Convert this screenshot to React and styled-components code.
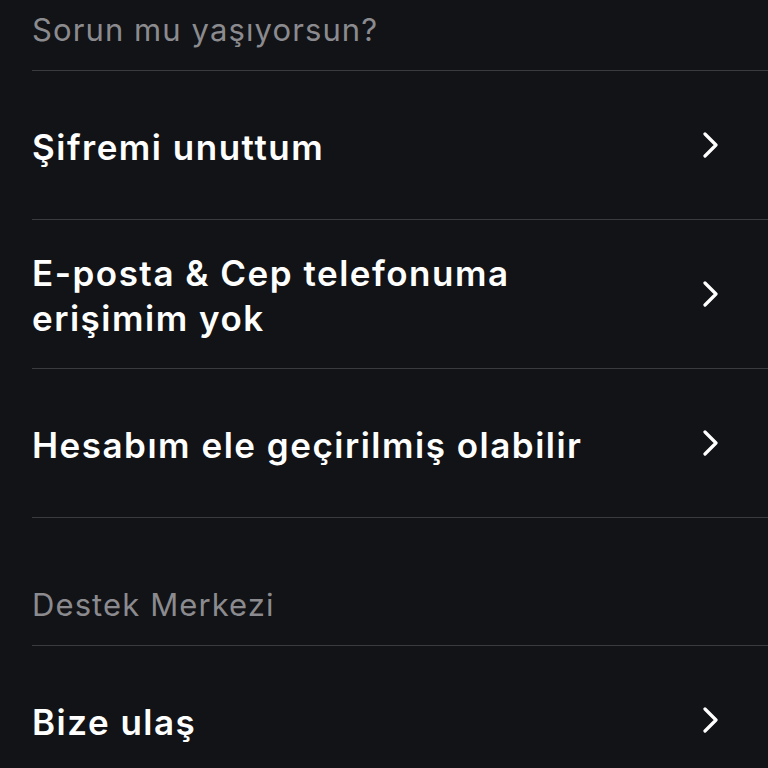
import React from 'react';
import styled, { createGlobalStyle } from 'styled-components';

const GlobalStyle = createGlobalStyle`
    html, body {
        margin: 0;
        padding: 0;
        background: #121316;
    }
    body {
        font-family: Inter, "Noto Sans", sans-serif;
        -webkit-font-smoothing: antialiased;
    }
`;

const sections = [
    {
        title: 'Sorun mu yaşıyorsun?',
        items: [
            'Şifremi unuttum',
            'E-posta & Cep telefonuma erişimim yok',
            'Hesabım ele geçirilmiş olabilir',
        ],
    },
    {
        title: 'Destek Merkezi',
        items: ['Bize ulaş'],
    },
];

const Chevron = () => (
    <svg width="18" height="26" viewBox="0 0 18 26" fill="none">
        <path d="M3 2 L14 13 L3 24" stroke="#fff" strokeWidth="3.2" strokeLinecap="round" strokeLinejoin="round"/>
    </svg>
);

export default function App() {
    return (
        <Page>
            <GlobalStyle/>
            {sections.map((section, i) => (
                <Section key={section.title}>
                    <SectionTitle first={i === 0}>{section.title}</SectionTitle>
                    {section.items.map(item => (
                        <Row key={item}>
                            <RowLabel>{item}</RowLabel>
                            <ChevronBox><Chevron/></ChevronBox>
                        </Row>
                    ))}
                </Section>
            ))}
        </Page>
    );
}

const Page = styled.div`
    min-height: 768px;
    background: #121316;
    padding-left: 32px;
    overflow: hidden;
`;

const Section = styled.section`
    display: flex;
    flex-direction: column;
`;

const SectionTitle = styled.div`
    height: ${p => (p.first ? '71px' : '128px')};
    box-sizing: border-box;
    display: flex;
    align-items: flex-end;
    padding-bottom: 22px;
    font-size: 31px;
    font-weight: 400;
    color: #8b8b8f;
    letter-spacing: 1.1px;
    border-bottom: 1.5px solid #3a3b3f;
`;

const Row = styled.div`
    height: 149px;
    box-sizing: border-box;
    display: flex;
    align-items: center;
    justify-content: space-between;
    padding-top: 4px;
    padding-right: 48px;
    border-bottom: 1.5px solid #3a3b3f;
`;

const RowLabel = styled.div`
    max-width: 560px;
    font-size: 35px;
    font-weight: 600;
    line-height: 45px;
    color: #ffffff;
    letter-spacing: 1.5px;
`;

const ChevronBox = styled.div`
    display: flex;
    align-items: center;
    justify-content: center;
    margin-top: -4px;
`;
